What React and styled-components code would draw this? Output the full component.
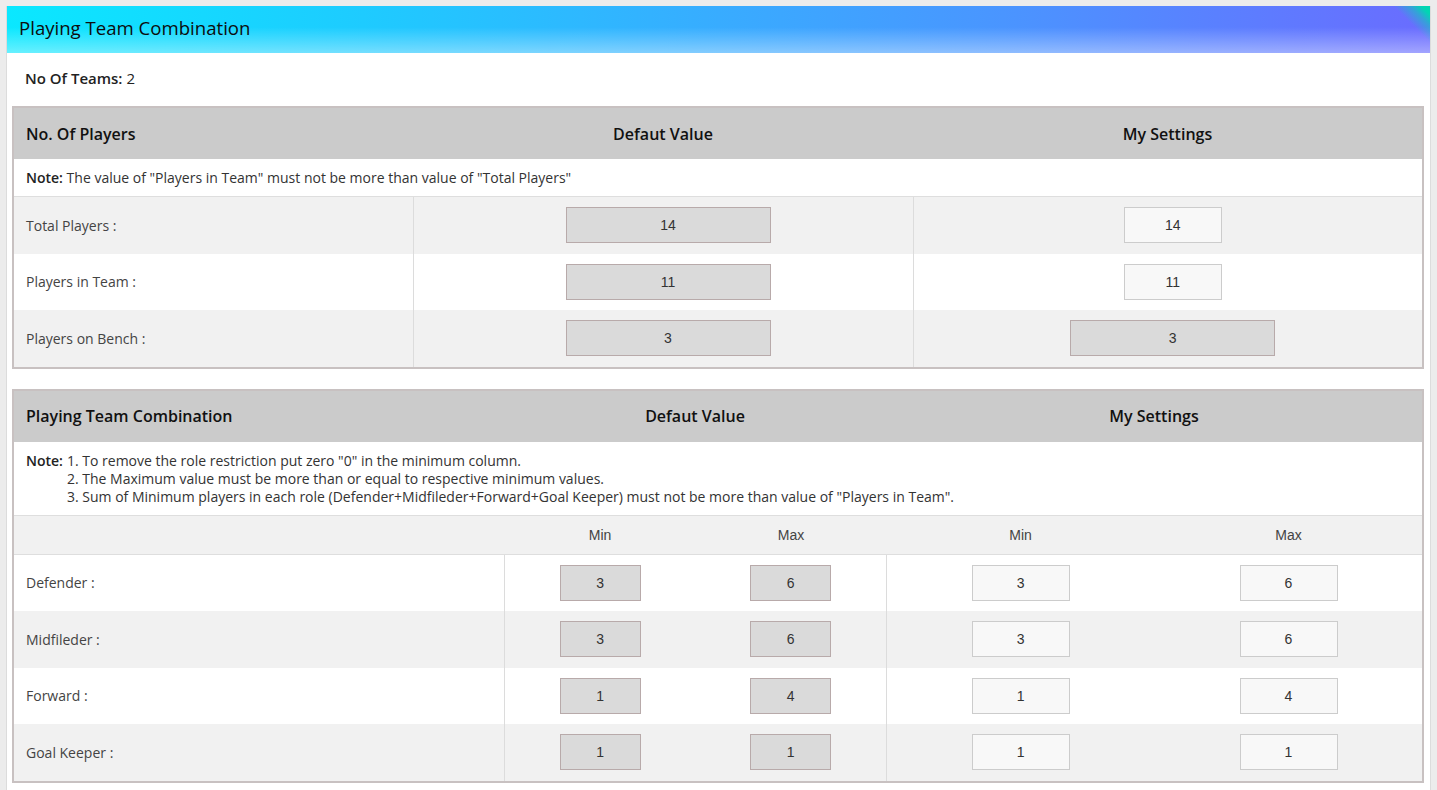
import React from "react";
import styled, { createGlobalStyle } from "styled-components";

const GlobalStyle = createGlobalStyle`
	body {
		margin: 0;
		background: #ececec;
		font-family: "Open Sans", "Noto Sans", sans-serif;
		color: #333;
	}
`;

const playerRows = [
	{ label: "Total Players :", def: 14, mine: 14 },
	{ label: "Players in Team :", def: 11, mine: 11 },
	{ label: "Players on Bench :", def: 3, mine: 3, locked: true },
];

const roleRows = [
	{ label: "Defender :", min: 3, max: 6 },
	{ label: "Midfileder :", min: 3, max: 6 },
	{ label: "Forward :", min: 1, max: 4 },
	{ label: "Goal Keeper :", min: 1, max: 1 },
];

function App() {
	return (
		<>
			<GlobalStyle />
			<Panel>
				<PanelHeader>
					<h1>Playing Team Combination</h1>
				</PanelHeader>
				<PanelBody>
					<TeamCount>
						<b>No Of Teams:</b> 2
					</TeamCount>

					<Table>
						<colgroup>
							<col style={{ width: 400 }} />
							<col style={{ width: 500 }} />
							<col />
						</colgroup>
						<thead>
							<tr>
								<HeadCell>No. Of Players</HeadCell>
								<HeadCell $center>Defaut Value</HeadCell>
								<HeadCell $center>My Settings</HeadCell>
							</tr>
						</thead>
						<tbody>
							<tr>
								<NoteCell colSpan={3}>
									<b>Note:</b> The value of "Players in Team" must not be more
									than value of "Total Players"
								</NoteCell>
							</tr>
							{playerRows.map((row, i) => (
								<Row key={row.label} $shade={i % 2 === 0}>
									<LabelCell>{row.label}</LabelCell>
									<ValueCell $divider $shift={10}>
										<ValueBox $wide readOnly value={row.def} />
									</ValueCell>
									<ValueCell $divider $shift={10}>
										{row.locked ? (
											<ValueBox $wide readOnly value={row.mine} />
										) : (
											<ValueBox $editable defaultValue={row.mine} />
										)}
									</ValueCell>
								</Row>
							))}
						</tbody>
					</Table>

					<Table>
						<colgroup>
							<col style={{ width: 491 }} />
							<col style={{ width: 192 }} />
							<col style={{ width: 190 }} />
							<col style={{ width: 269 }} />
							<col />
						</colgroup>
						<thead>
							<tr>
								<HeadCell>Playing Team Combination</HeadCell>
								<HeadCell $center colSpan={2}>
									Defaut Value
								</HeadCell>
								<HeadCell $center colSpan={2}>
									My Settings
								</HeadCell>
							</tr>
						</thead>
						<tbody>
							<tr>
								<NoteCell colSpan={5}>
									<NoteList>
										<b>Note:</b>
										<ol>
											<li>1. To remove the role restriction put zero "0" in the minimum column.</li>
											<li>2. The Maximum value must be more than or equal to respective minimum values.</li>
											<li>
												3. Sum of Minimum players in each role
												(Defender+Midfileder+Forward+Goal Keeper) must not be more
												than value of "Players in Team".
											</li>
										</ol>
									</NoteList>
								</NoteCell>
							</tr>
							<Row $shade>
								<SubHeadCell />
								<SubHeadCell>Min</SubHeadCell>
								<SubHeadCell>Max</SubHeadCell>
								<SubHeadCell>Min</SubHeadCell>
								<SubHeadCell>Max</SubHeadCell>
							</Row>
							{roleRows.map((row, i) => (
								<Row key={row.label} $shade={i % 2 === 1}>
									<LabelCell>{row.label}</LabelCell>
									<ValueCell $divider>
										<ValueBox readOnly value={row.min} />
									</ValueCell>
									<ValueCell>
										<ValueBox readOnly value={row.max} />
									</ValueCell>
									<ValueCell $divider>
										<ValueBox $editable defaultValue={row.min} />
									</ValueCell>
									<ValueCell>
										<ValueBox $editable defaultValue={row.max} />
									</ValueCell>
								</Row>
							))}
						</tbody>
					</Table>
				</PanelBody>
			</Panel>
		</>
	);
}

const Panel = styled.div`
	margin: 6px;
	background: #fff;
	border: 1px solid #dcdcdc;
	border-top: none;
	min-height: 800px;
`;

const PanelHeader = styled.div`
	height: 47px;
	display: flex;
	align-items: center;
	padding: 0 12px 4px;
	box-sizing: border-box;
	background:
		linear-gradient(225deg, #00d6b2 0, #00d6b2 6px, rgba(0, 214, 178, 0.5) 14px, transparent 26px),
		linear-gradient(to bottom, rgba(255, 255, 255, 0) 45%, rgba(255, 255, 255, 0.38) 100%),
		linear-gradient(to right, #0ae8ff 0%, #1ecbff 25%, #38acff 50%, #4a95ff 70%, #5a80ff 85%, #6a6cff 100%);

	h1 {
		margin: 0;
		font-size: 18.6px;
		font-weight: 500;
		color: #0d0d0d;
	}
`;

const PanelBody = styled.div`
	padding: 0 6px 0 5px;
`;

const TeamCount = styled.div`
	height: 53px;
	display: flex;
	align-items: center;
	gap: 4px;
	padding: 0 0 4px 13px;
	box-sizing: border-box;
	font-size: 15px;
	color: #222;

	b {
		font-weight: 600;
	}
`;

const Table = styled.table`
	width: 100%;
	border-collapse: collapse;
	table-layout: fixed;
	border: 2px solid #c8c1c1;
	margin-bottom: 20px;
`;

const HeadCell = styled.th`
	height: 51px;
	padding: 0 12px;
	background: #cbcbcb;
	font-size: 16px;
	font-weight: 600;
	color: #111;
	text-align: ${(p) => (p.$center ? "center" : "left")};
`;

const NoteCell = styled.td`
	padding: 10px 12px 9px;
	font-size: 14px;
	line-height: 18px;
	color: #333;
	border-bottom: 1px solid #dedede;

	b {
		font-weight: 600;
		color: #222;
	}
`;

const NoteList = styled.div`
	display: flex;
	gap: 4px;

	ol {
		margin: 0;
		padding: 0;
		list-style: none;
	}
`;

const Row = styled.tr`
	background: ${(p) => (p.$shade ? "#f1f1f1" : "#fff")};
`;

const SubHeadCell = styled.td`
	height: 38px;
	padding: 0;
	text-align: center;
	font-family: "Liberation Sans", Arial, sans-serif;
	font-size: 14px;
	color: #444;
	border-bottom: 1px solid #dedede;
`;

const LabelCell = styled.td`
	height: 56.5px;
	padding: 0 12px;
	font-size: 14px;
	color: #444;
`;

const ValueCell = styled.td`
	text-align: center;
	padding: 0 0 0 ${(p) => p.$shift || 0}px;
	border-left: ${(p) => (p.$divider ? "1px solid #dcdcdc" : "none")};
`;

const ValueBox = styled.input`
	box-sizing: border-box;
	width: ${(p) => (p.$wide ? "205px" : p.$editable ? "98px" : "81px")};
	height: 36px;
	padding: 0;
	text-align: center;
	font-family: "Liberation Sans", Arial, sans-serif;
	font-size: 14px;
	color: #333;
	background: ${(p) => (p.$editable ? "#f8f8f8" : "#dadada")};
	border: 1px solid ${(p) => (p.$editable ? "#cccccc" : "#b8aaaa")};
	outline: none;
`;

export default App;
